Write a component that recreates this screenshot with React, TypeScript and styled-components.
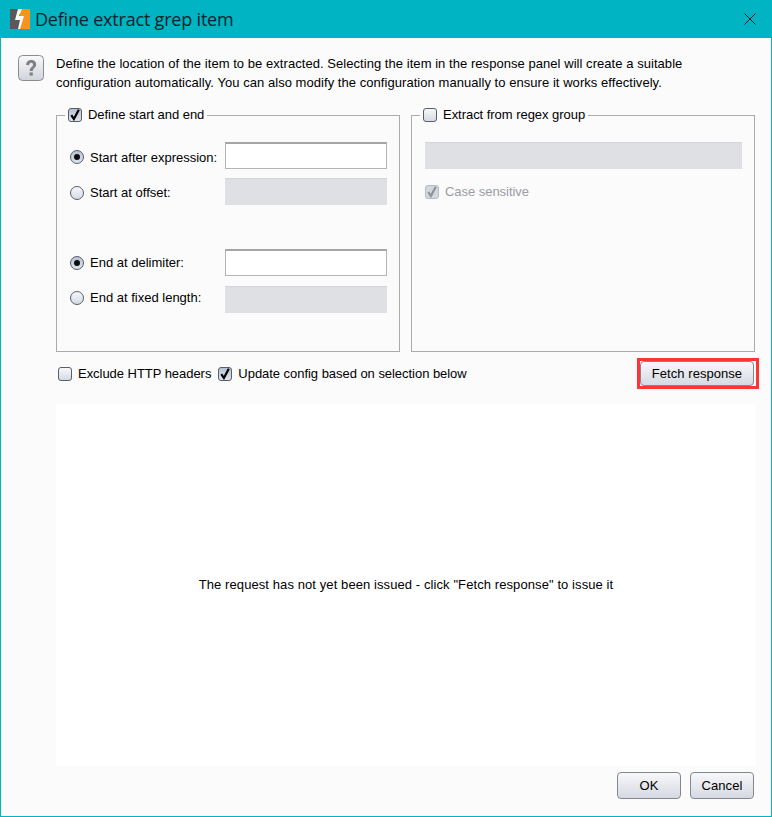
import React from "react";
import styled, { createGlobalStyle } from "styled-components";

const Global = createGlobalStyle`
  html, body { margin: 0; padding: 0; background: #fbfbfc; }
  body { font-family: "Liberation Sans", Arial, sans-serif; font-size: 13px; color: #000; }
  * { box-sizing: border-box; }
`;

const Window = styled.div`
  width: 772px; height: 817px; display: flex; flex-direction: column;
  border: 1px solid #00b4c3; border-top: 0; background: #fbfbfc;
`;
const TitleBar = styled.header`
  height: 38px; flex: none; margin: 0 -1px; background: #00b4c3; display: flex; align-items: center; padding: 0 0 0 10px;
`;
const Title = styled.h1`
  margin: 0 0 0 5px; font: 400 18px "Open Sans", sans-serif; letter-spacing: -0.2px; color: #06222a; flex: 1;
`;
const CloseButton = styled.button`
  width: 44px; height: 38px; border: 0; padding: 0; background: transparent; display: flex; align-items: center; justify-content: center;
`;
const Content = styled.main`
  flex: 1; display: flex; flex-direction: column; min-height: 0; padding: 0 16px 0 17px;
`;
const Intro = styled.section`
  display: flex; gap: 12px; padding-top: 16px; height: 69px; flex: none;
`;
const IntroText = styled.p`
  margin: 0; font-size: 13px; line-height: 19px; letter-spacing: 0.05px; white-space: nowrap;
`;
const Panels = styled.div`
  margin-left: 38px; display: grid; grid-template-columns: 344px 344px; column-gap: 11px; height: 245px; flex: none;
`;
const Group = styled.fieldset`
  margin: 0; min-width: 0; border: 1px solid #ababab; padding: 0; display: flex; flex-direction: column; height: 100%;
`;
const Legend = styled.legend`
  margin-left: 8px; padding: 0 3px; height: 16px; display: flex; align-items: center;
`;
const CheckLabel = styled.label<{ $muted?: boolean }>`
  display: inline-flex; align-items: center; gap: 6px; letter-spacing: -0.04px; white-space: nowrap; line-height: 16px;
  color: ${(p) => (p.$muted ? "#9a9ca2" : "#000")};
`;
const Box = styled.span<{ $muted?: boolean; $on?: boolean }>`
  width: 14px; height: 14px; flex: none; border-radius: 3px; display: inline-flex; align-items: center; justify-content: center;
  border: 1px solid ${(p) => (p.$muted ? "#b8bcc4" : "#565d6b")};
  background: ${(p) => (p.$muted ? "#d4d7dd" : p.$on ? "linear-gradient(#b7c1d2, #dfe4ec)" : "linear-gradient(#f6f7f9, #d6dae3)")};
`;
const FormStack = styled.div`
  display: flex; flex-direction: column; padding: 19px 12px 0 13px;
`;
const FormRow = styled.div<{ $gap?: number }>`
  display: grid; grid-template-columns: 155px 162px; align-items: center; height: 27px; margin-bottom: ${(p) => p.$gap ?? 0}px;
`;
const RadioLabel = styled.label<{ $drop?: number; $lift?: number }>`
  display: flex; align-items: center; gap: 6px; letter-spacing: 0; white-space: nowrap;
  padding-top: ${(p) => p.$drop ?? 0}px; padding-bottom: ${(p) => p.$lift ?? 0}px;
`;
const Radio = styled.span<{ $on?: boolean }>`
  width: 14px; height: 14px; border-radius: 50%; flex: none; border: 1px solid #565d6b; display: inline-flex; align-items: center; justify-content: center;
  background: ${(p) => (p.$on ? "linear-gradient(#b7c1d2, #dfe4ec)" : "linear-gradient(#f6f7f9, #d6dae3)")};
  &::after { content: ""; width: 6px; height: 6px; border-radius: 50%; background: ${(p) => (p.$on ? "#0d0d0d" : "transparent")}; }
`;
const TextField = styled.div<{ $disabled?: boolean }>`
  height: 27px; width: 100%;
  background: ${(p) => (p.$disabled ? "#dee0e4" : "#fff")};
  border: ${(p) => (p.$disabled ? "0" : "1px solid #b4b4b4")};
  border-top: ${(p) => (p.$disabled ? "1px solid #d3d5d9" : "2px solid #a6a6a6")};
`;
const RegexStack = styled.div`
  display: flex; flex-direction: column; gap: 15px; padding: 19px 12px 0 13px;
`;
const Options = styled.div`
  margin-left: 40px; height: 52px; flex: none; display: flex; align-items: center; gap: 7px; padding: 6px 0 15px;
`;
const Spacer = styled.div` flex: 1; `;
const Highlight = styled.div`
  display: flex; flex: none; border: 3px solid #ff3535; padding-right: 2px; margin-right: -4px;
`;
const Button = styled.button<{ $wide?: number; $short?: boolean }>`
  width: ${(p) => p.$wide ?? 64}px; height: ${(p) => (p.$short ? 25 : 27)}px; flex: none; padding: 0; border-radius: 4px;
  border: 1px solid #84878e; background: linear-gradient(#f7f8fa, #d6d9e2);
  font: 13px "Liberation Sans", sans-serif; letter-spacing: 0.05px; color: #000;
`;
const ResponsePanel = styled.section`
  margin-left: 38px; margin-right: -1px; height: 362px; flex: none; background: #fff; display: flex; align-items: center; justify-content: center;
  letter-spacing: 0.09px; padding-bottom: 2px;
`;
const Footer = styled.footer`
  flex: 1; display: flex; justify-content: flex-end; gap: 9px; padding: 6px 1px 0 0;
`;

const Check = ({ muted }: { muted?: boolean }) => (
  <svg width="12" height="12" viewBox="0 0 12 12" aria-hidden>
    <path d="M2.3 6.2 L4.9 10 L9.8 0.8" fill="none" stroke={muted ? "#8f939b" : "#000"} strokeWidth="2.2" />
  </svg>
);

const Logo = () => (
  <svg width="20" height="20" viewBox="0 0 20 20" aria-hidden>
    <rect width="10" height="20" fill="#58595b" />
    <rect x="10" width="10" height="20" fill="#f7931e" />
    <path d="M8 0H12L9 7H14L10 20H8L10 11H5Z" fill="#fdfdfd" />
  </svg>
);

const HelpIcon = () => (
  <svg width="26" height="26" viewBox="0 0 26 26" aria-hidden style={{ flex: "none", marginTop: 1 }}>
    <defs>
      <linearGradient id="help" x1="0" y1="0" x2="0" y2="1">
        <stop offset="0" stopColor="#fafafb" />
        <stop offset="1" stopColor="#d0d3da" />
      </linearGradient>
    </defs>
    <rect x="0.5" y="0.5" width="25" height="25" rx="4" fill="url(#help)" stroke="#8a8c90" />
    <path d="M8.2 10C8.2 6.8 10.4 5 13.2 5C16.1 5 18.2 6.8 18.2 9.4C18.2 12.8 14.8 13 14.8 16H11.6C11.6 12.2 15 12 15 9.7C15 8.6 14.3 7.8 13.1 7.8C11.9 7.8 11.2 8.8 11.2 10.2Z" fill="#7f8186" />
    <rect x="11.6" y="17.4" width="3.2" height="3.2" fill="#7f8186" />
  </svg>
);

const Field = ({ label, on, disabled, gap, drop, lift }: { label: string; on?: boolean; disabled?: boolean; gap?: number; drop?: number; lift?: number }) => (
  <FormRow $gap={gap}>
    <RadioLabel $drop={drop} $lift={lift}>
      <Radio $on={on} />
      {label}
    </RadioLabel>
    <TextField $disabled={disabled} />
  </FormRow>
);

export default function App() {
  return (
    <>
      <Global />
      <Window>
        <TitleBar>
          <Logo />
          <Title>Define extract grep item</Title>
          <CloseButton aria-label="Close">
            <svg width="12" height="12" viewBox="0 0 12 12" aria-hidden>
              <path d="M0.5 0.5L11.5 11.5M11.5 0.5L0.5 11.5" stroke="#0a1a1c" strokeWidth="1" />
            </svg>
          </CloseButton>
        </TitleBar>
        <Content>
          <Intro>
            <HelpIcon />
            <IntroText>
              Define the location of the item to be extracted. Selecting the item in the response panel will create a suitable
              <br />
              configuration automatically. You can also modify the configuration manually to ensure it works effectively.
            </IntroText>
          </Intro>
          <Panels>
            <Group>
              <Legend>
                <CheckLabel>
                  <Box $on><Check /></Box>
                  Define start and end
                </CheckLabel>
              </Legend>
              <FormStack>
                <Field label="Start after expression:" on gap={9} drop={3} />
                <Field label="Start at offset:" disabled gap={44} drop={2} />
                <Field label="End at delimiter:" on gap={10} />
                <Field label="End at fixed length:" disabled lift={4} />
              </FormStack>
            </Group>
            <Group>
              <Legend>
                <CheckLabel>
                  <Box />
                  Extract from regex group
                </CheckLabel>
              </Legend>
              <RegexStack>
                <TextField $disabled />
                <CheckLabel $muted>
                  <Box $muted><Check muted /></Box>
                  Case sensitive
                </CheckLabel>
              </RegexStack>
            </Group>
          </Panels>
          <Options>
            <CheckLabel>
              <Box />
              Exclude HTTP headers
            </CheckLabel>
            <CheckLabel>
              <Box $on><Check /></Box>
              Update config based on selection below
            </CheckLabel>
            <Spacer />
            <Highlight>
              <Button $wide={114} $short>Fetch response</Button>
            </Highlight>
          </Options>
          <ResponsePanel>The request has not yet been issued - click "Fetch response" to issue it</ResponsePanel>
          <Footer>
            <Button>OK</Button>
            <Button>Cancel</Button>
          </Footer>
        </Content>
      </Window>
    </>
  );
}
